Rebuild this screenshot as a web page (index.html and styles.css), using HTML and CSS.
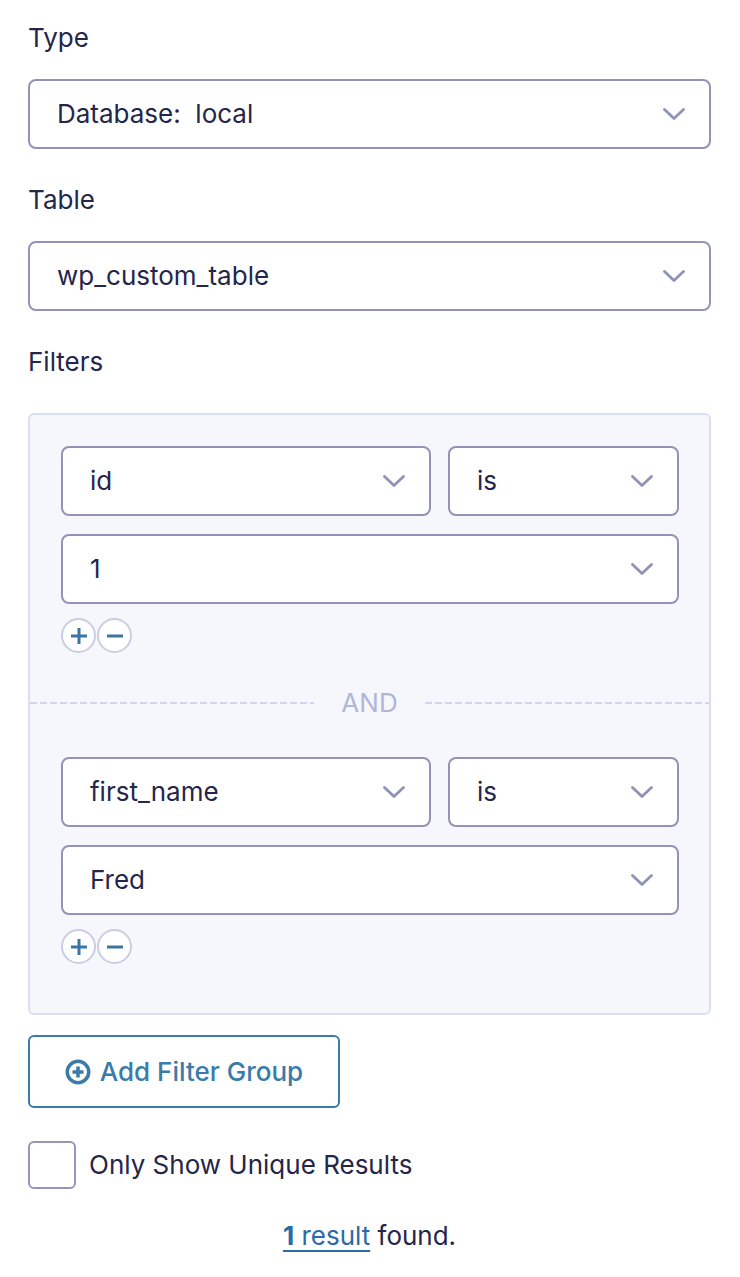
FILE: index.html
```html
<!DOCTYPE html>
<html>
<head>
<meta charset="utf-8">
<link rel="stylesheet" href="styles.css">
</head>
<body>
<div class="form">
  <label class="label label-first">Type</label>
  <div class="select">
    <span class="select-text">Database:&nbsp; local</span>
    <svg class="chev" viewBox="0 0 22 12"><path d="M1.5 1.5 L11 10.5 L20.5 1.5"/></svg>
  </div>

  <label class="label">Table</label>
  <div class="select">
    <span class="select-text">wp_custom_table</span>
    <svg class="chev" viewBox="0 0 22 12"><path d="M1.5 1.5 L11 10.5 L20.5 1.5"/></svg>
  </div>

  <label class="label label-filters">Filters</label>
  <div class="filters">
    <div class="group group-first">
      <div class="row">
        <div class="select field">
          <span class="select-text">id</span>
          <svg class="chev" viewBox="0 0 22 12"><path d="M1.5 1.5 L11 10.5 L20.5 1.5"/></svg>
        </div>
        <div class="select op">
          <span class="select-text">is</span>
          <svg class="chev" viewBox="0 0 22 12"><path d="M1.5 1.5 L11 10.5 L20.5 1.5"/></svg>
        </div>
      </div>
      <div class="select value">
        <span class="select-text">1</span>
        <svg class="chev" viewBox="0 0 22 12"><path d="M1.5 1.5 L11 10.5 L20.5 1.5"/></svg>
      </div>
      <div class="pm">
        <span class="circ"><svg viewBox="0 0 18 18"><path d="M9 1 V17 M1 9 H17"/></svg></span>
        <span class="circ"><svg viewBox="0 0 18 18"><path d="M1 9 H17"/></svg></span>
      </div>
    </div>
    <div class="divider">
      <span class="dash"></span>
      <span class="and">AND</span>
      <span class="dash"></span>
    </div>
    <div class="group group-last">
      <div class="row">
        <div class="select field">
          <span class="select-text">first_name</span>
          <svg class="chev" viewBox="0 0 22 12"><path d="M1.5 1.5 L11 10.5 L20.5 1.5"/></svg>
        </div>
        <div class="select op">
          <span class="select-text">is</span>
          <svg class="chev" viewBox="0 0 22 12"><path d="M1.5 1.5 L11 10.5 L20.5 1.5"/></svg>
        </div>
      </div>
      <div class="select value">
        <span class="select-text">Fred</span>
        <svg class="chev" viewBox="0 0 22 12"><path d="M1.5 1.5 L11 10.5 L20.5 1.5"/></svg>
      </div>
      <div class="pm">
        <span class="circ"><svg viewBox="0 0 18 18"><path d="M9 1 V17 M1 9 H17"/></svg></span>
        <span class="circ"><svg viewBox="0 0 18 18"><path d="M1 9 H17"/></svg></span>
      </div>
    </div>
  </div>

  <button class="add-btn">
    <svg class="add-icon" viewBox="0 0 26 26"><circle cx="13" cy="13" r="10.75"/><path d="M13 7.5 V18.5 M7.5 13 H18.5"/></svg>
    <span>Add Filter Group</span>
  </button>

  <div class="check-row">
    <span class="checkbox"></span>
    <span class="check-label">Only Show Unique Results</span>
  </div>

  <p class="result"><a href="#" class="result-link"><b>1</b> result</a> found.</p>
</div>
</body>
</html>
```

FILE: styles.css
```css
* { box-sizing: border-box; }

html, body {
  margin: 0;
  padding: 0;
  background: #ffffff;
}

body {
  font-family: Inter, "Noto Sans", "Liberation Sans", sans-serif;
  color: #24264a;
  font-size: 26px;
}

.form {
  padding: 0 29px 0 28px;
  display: flex;
  flex-direction: column;
}

.label {
  display: block;
  line-height: 36px;
  margin: 33px 0 23px;
}

.label-first { margin-top: 20px; }
.label-filters { margin-bottom: 33px; }

.select {
  height: 70px;
  border: 2px solid #9293b6;
  border-radius: 8px;
  background: #fff;
  display: flex;
  align-items: center;
  justify-content: space-between;
  padding: 0 24px 0 27px;
}

.select-text {
  line-height: 36px;
}

.chev {
  width: 22px;
  height: 12px;
  flex: none;
}

.chev path {
  fill: none;
  stroke: #9093b6;
  stroke-width: 2.8;
  stroke-linecap: round;
  stroke-linejoin: round;
}

.filters {
  background: #f6f7fc;
  border: 2px solid #dcdfee;
  border-radius: 6px;
}

.group {
  padding: 31px 30px 27px 31px;
  display: flex;
  flex-direction: column;
  gap: 18px;
}

.group-last { padding-bottom: 49px; }

.row {
  display: flex;
  gap: 17px;
}

.field { flex: 0 0 370px; }
.op { flex: 1; }

.pm {
  display: flex;
  gap: 1px;
  margin-top: -4px;
}

.circ {
  width: 35px;
  height: 35px;
  border-radius: 50%;
  border: 2px solid #cacde3;
  background: #fff;
  display: flex;
  align-items: center;
  justify-content: center;
}

.circ svg {
  width: 18px;
  height: 18px;
}

.circ path {
  fill: none;
  stroke: #3a76a1;
  stroke-width: 3;
}

.divider {
  height: 46px;
  display: flex;
  align-items: center;
  gap: 27px;
}

.dash {
  flex: 1;
  height: 2px;
  background: repeating-linear-gradient(90deg, #d3d6ea 0 7px, transparent 7px 10px);
}

.and {
  color: #b0b6d9;
  line-height: 36px;
}

.add-btn {
  margin-top: 20px;
  align-self: flex-start;
  width: 312px;
  height: 73px;
  border: 2px solid #3b7ba8;
  border-radius: 6px;
  background: #fff;
  color: #3b7ba8;
  font-family: inherit;
  font-size: 26px;
  font-weight: 500;
  display: flex;
  align-items: center;
  justify-content: center;
  gap: 9px;
  padding: 0;
}

.add-icon {
  width: 26px;
  height: 26px;
}

.add-icon circle {
  fill: none;
  stroke: #3b7ba8;
  stroke-width: 3.5;
}

.add-icon path {
  fill: none;
  stroke: #3b7ba8;
  stroke-width: 3.5;
}

.check-row {
  margin-top: 33px;
  display: flex;
  align-items: center;
  gap: 13px;
}

.checkbox {
  width: 48px;
  height: 48px;
  border: 2px solid #9896b8;
  border-radius: 6px;
  background: #fff;
  flex: none;
}

.check-label {
  line-height: 36px;
}

.result {
  margin: 29px 0 0;
  text-align: center;
  line-height: 36px;
}

.result-link {
  color: #2b6ba6;
  text-decoration: underline;
  text-decoration-thickness: 2px;
  text-underline-offset: 5px;
}

.result-link b { font-weight: 700; }
```
